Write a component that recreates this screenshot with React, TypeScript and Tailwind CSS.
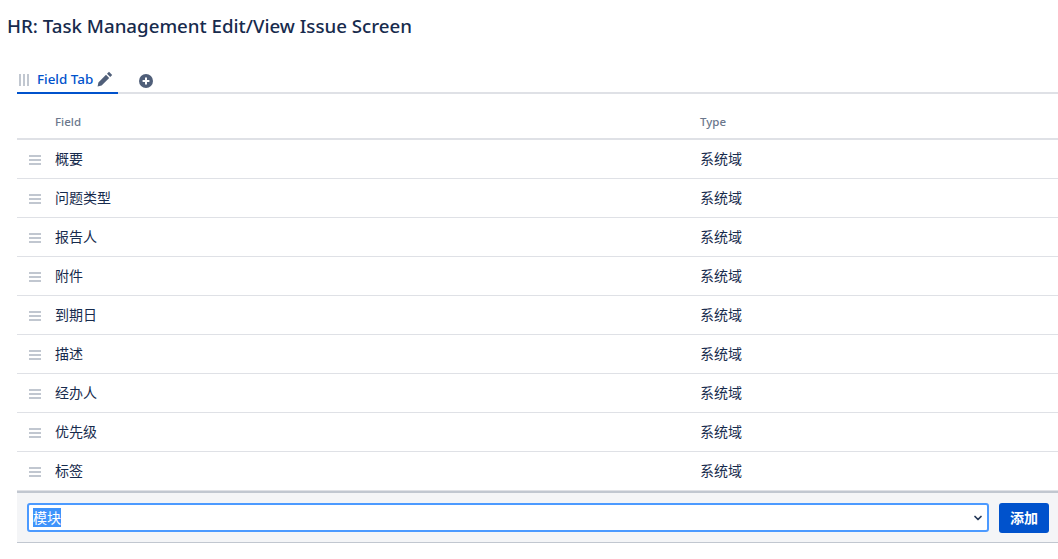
import { ChevronDown } from 'lucide-react'

const FIELDS = ['概要', '问题类型', '报告人', '附件', '到期日', '描述', '经办人', '优先级', '标签']

const FONT = "font-['Noto_Sans','Noto_Sans_CJK_SC',sans-serif]"

function DragLines() {
  return (
    <div className="flex w-[12px] flex-col gap-[2px]">
      <span className="h-[2px] bg-[#c1c7d0]" />
      <span className="h-[2px] bg-[#c1c7d0]" />
      <span className="h-[2px] bg-[#c1c7d0]" />
    </div>
  )
}

function FieldRow({ name }: { name: string }) {
  return (
    <div className="flex h-[39px] items-center border-b border-[#dfe1e6] text-[14px] text-[#172b4d]">
      <div className="w-[38px] pl-[12px] pt-[2px]">
        <DragLines />
      </div>
      <div className="w-[645px] pb-[2px]">{name}</div>
      <div className="pb-[2px]">系统域</div>
    </div>
  )
}

export default function App() {
  return (
    <div className={`${FONT} h-[559px] w-[1058px] overflow-hidden bg-white`}>
      <h1 className="pl-[7px] pt-[12px] text-[18.7px] leading-[28px] font-medium text-[#172b4d]">
        HR: Task Management Edit/View Issue Screen
      </h1>

      <div className="pl-[17px]">
        <div className="mt-[26px] flex items-start border-b-2 border-[#dfe1e6]">
          <div className="-mb-[2px] flex h-[28px] w-[101px] items-center border-b-2 border-[#0052cc] pb-[1px] pl-[2px]">
            <div className="mt-[3px] flex gap-[2px]">
              <span className="h-[12px] w-[2px] bg-[#c1c7d0]" />
              <span className="h-[12px] w-[2px] bg-[#c1c7d0]" />
              <span className="h-[12px] w-[2px] bg-[#c1c7d0]" />
            </div>
            <span className="ml-[8px] pt-[1px] text-[13.4px] font-medium text-[#0052cc]">Field Tab</span>
            <svg className="ml-[4px]" width="16" height="16" viewBox="0 0 16 16">
              <path d="M12 .8l3.2 3.2-2 2L10 2.800zM9 3.800L12.200 7l-7.600 7.600L.6 15.400l.8-4z" fill="#505f79" />
            </svg>
          </div>
          <svg className="ml-[21px] mt-[8px]" width="14" height="14" viewBox="0 0 14 14">
            <circle cx="7" cy="7" r="7" fill="#505f79" />
            <path d="M7 3.600v6.800M3.600 7h6.800" stroke="#fff" strokeWidth="2" />
          </svg>
        </div>

        <div className="flex h-[46px] items-center border-b-2 border-[#dfe1e6] pt-[12px] text-[11.5px] font-medium text-[#6b778c]">
          <div className="w-[38px]" />
          <div className="w-[645px]">Field</div>
          <div>Type</div>
        </div>

        {FIELDS.map(f => <FieldRow key={f} name={f} />)}

        <div className="flex h-[52px] items-center gap-[10px] border-t-2 border-b border-t-[#c1c7d0] border-b-[#c1c7d0] bg-[#f4f5f7] pl-[10px] pr-[9px]">
          <div className="flex h-[29px] flex-1 items-center rounded-[3px] border-2 border-[#4c9aff] bg-white pl-[4px] pr-[3px] text-[14px] text-[#172b4d]">
            <span className="bg-[#3f93fb] leading-[19px] text-white">模块</span>
            <ChevronDown className="ml-auto h-[12px] w-[12px] text-[#253858]" strokeWidth={3.5} />
          </div>
          <button className="flex h-[30px] w-[50px] items-center justify-center rounded-[3px] bg-[#0052cc] text-[14px] font-bold text-white">
            添加
          </button>
        </div>
      </div>
    </div>
  )
}
